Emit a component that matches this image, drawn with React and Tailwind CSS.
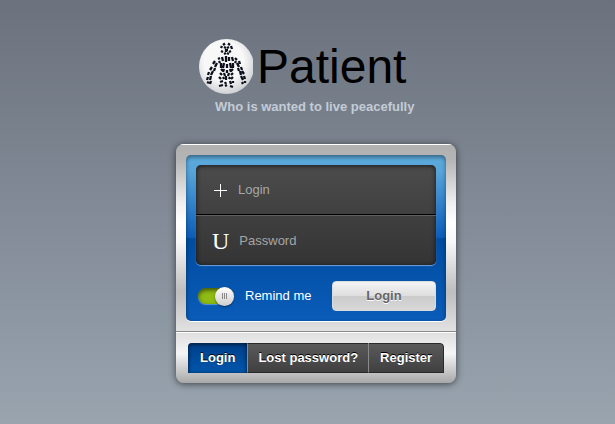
const silverTop =
  "bg-[linear-gradient(to_bottom,#b0b0b0_0%,#b4b4b4_8%,#f0f0f0_32%,#ffffff_42%,#f8f8f8_52%,#bfbfbf_78%,#bfbfbf_80%,#e2e2e2_100%)]";

const bones = [
  "M22 9l1-2M24 6l2-1.500M29 4.500l2 1.500M32 7l1 3M25 8l2 1M30 8l-2 1M22 12l2 1M32 12l-2 1M26 11h3M25 15l2-1M30 15l-2-1M27 10v3",
  "M19 20l2-1M23 18l1 4M27 17v6M30 18v4M33 18l1 4M36 19l2 2M20 22l1 2M37 22l-1 2",
  "M16 22l-2 3M18 24l-2 4M22 24v5M25 24l-1 5M28 25v4M31 24l1 5M34 24v5M38 24l2 4M40 22l1 3",
  "M13 28l-2 3M16 29l-1 3M22 30l2 2M25 30l-1 3M28 31v3M31 30l1 3M34 30l-2 2M39 29l1 3M42 28l1 3",
  "M10 33l-1 3M14 32l-2 4M21 34l2 2M25 34l1 3M30 34l-1 3M34 34l-2 2M41 32l1 4M43 32l2 3",
  "M9 38l-1 3M12 37l-1 4M20 38l2 2M24 38l1 2M27 37v4M31 38l-1 2M34 38l-2 2M42 37l2 4M45 37l1 3",
  "M8 43l2 1M12 42l-1 3M21 43l3-1M26 43l1 2M31 42l1 3M34 42v2M43 43l1 2M46 42v2",
  "M20 47l4-1M26 47l2-1M31 47l3 1",
];

function Logo() {
  return (
    <svg viewBox="0 0 54 55" className="h-[55px] w-[54px] shrink-0" aria-hidden="true">
      <defs>
        <radialGradient id="ball" cx="45%" cy="40%" r="60%">
          <stop offset="0.6" stopColor="#f8f8f8" />
          <stop offset="1" stopColor="#cfd1d4" />
        </radialGradient>
      </defs>
      <circle cx="27.5" cy="27.5" r="27.5" fill="url(#ball)" />
      <g fill="none" stroke="#0c0f1c" strokeWidth="2.3">
        {bones.map((d) => (
          <path key={d} d={d} />
        ))}
      </g>
    </svg>
  );
}

function Field({ id, label, type, children }) {
  return (
    <div className="flex h-[49px] items-center pl-4">
      <label htmlFor={id} aria-label={label} className="flex items-center text-white">
        {children}
      </label>
      <input
        id={id}
        type={type}
        placeholder={label}
        className="h-8 w-full min-w-0 bg-transparent pl-[10px] text-[13px] text-white outline-none placeholder:text-[#a6a6a6]"
      />
    </div>
  );
}

export default function App() {
  return (
    <main className="flex min-h-screen flex-col items-center bg-linear-to-b from-[#6b727e] to-[#99a4af] pt-[39px] pl-[17px] font-['Liberation_Sans',Arial,sans-serif]">
      <header className="w-[234px]">
        <h1 className="flex h-[55px] items-center gap-1 text-5xl leading-none text-black">
          <Logo />
          Patient
        </h1>
        <p className="pt-[5px] pl-4 text-[13px] leading-4 font-bold whitespace-nowrap text-[#c3ccd6]">
          Who is wanted to live peacefully
        </p>
      </header>

      <section className="mt-[29px] w-[280px] overflow-hidden rounded-lg shadow-[0_1px_7px_rgba(0,0,0,0.6)]">
        <form
          onSubmit={(e) => e.preventDefault()}
          className={`border-b border-[#8a8a8a] px-[10px] pt-[11px] pb-[10px] shadow-[inset_0_1px_0_#fff] ${silverTop}`}
        >
          <div className="rounded-[5px] bg-[linear-gradient(to_bottom,#5dabdc_0%,#57a5d9_10%,#0b5cba_50%,#004c9f_50%,#0a5cb9_100%)] p-[10px] shadow-[inset_0_2px_4px_rgba(0,0,0,0.45),0_1px_0_#fff]">
            <div className="rounded-[5px] bg-linear-to-b from-[#4c4c4c] to-[#343434] shadow-[inset_0_1px_5px_rgba(0,0,0,0.7),0_1px_1px_#6fa4dc]">
              <Field id="login" label="Login" type="text">
                <svg viewBox="0 0 16 16" className="h-4 w-4" stroke="currentColor" aria-hidden="true">
                  <path d="M8.5 2v13M2 8.5h13" />
                </svg>
              </Field>
              <div className="h-[2px] border-t border-black bg-[#606060]" />
              <Field id="password" label="Password" type="password">
                <span className="font-['Liberation_Serif',serif] text-2xl leading-none">U</span>
              </Field>
            </div>

            <div className="flex items-center justify-between pt-4">
              <label className="relative flex items-center text-[13px] text-white">
                <input
                  type="checkbox"
                  defaultChecked
                  className="peer mx-[2px] h-4 w-9 appearance-none rounded-full bg-[#555] shadow-[inset_0_2px_4px_rgba(0,0,0,0.6),0_1px_1px_#5b95d5] checked:bg-[#8fbb14]"
                />
                <span className="pointer-events-none absolute left-0 flex h-[19px] w-[19px] items-center justify-center gap-px rounded-full bg-linear-to-b from-white to-[#cfcfcf] shadow-[0_1px_2px_rgba(0,0,0,0.5)] peer-checked:left-[19px]">
                  <i className="h-[6px] w-px bg-[#888]" />
                  <i className="h-[6px] w-px bg-[#888]" />
                  <i className="h-[6px] w-px bg-[#888]" />
                </span>
                <span className="pl-[9px]">Remind me</span>
              </label>
              <button
                type="submit"
                className="h-[30px] w-[104px] rounded-[4px] border border-[#dcdcdc] bg-[linear-gradient(to_bottom,#f4f4f4_0%,#dedede_50%,#cbcbcb_50%,#d8d8d8_100%)] text-[13px] font-bold text-[#666] [text-shadow:0_1px_0_#fff]"
              >
                Login
              </button>
            </div>
          </div>
        </form>

        <div className="bg-[linear-gradient(to_bottom,#dedede_0%,#f5f5f5_42%,#a8a8a8_100%)] px-3 pt-[11px] pb-[10px] shadow-[inset_0_1px_0_#fff]">
          <nav className="flex h-[30px] w-fit overflow-hidden rounded-t-[4px] text-[13px] font-bold whitespace-nowrap text-white [text-shadow:0_-1px_0_#000]">
            <a
              href="#login"
              className="flex items-center bg-linear-to-b from-[#003f88] to-[#0056ad] px-3 shadow-[inset_0_1px_4px_rgba(0,0,0,0.7)]"
            >
              Login
            </a>
            <a
              href="#lost"
              className="flex items-center border-t border-b border-l border-y-[#2a2a2a] border-l-[#8a8a8a] bg-linear-to-b from-[#5a5a5a] to-[#404040] px-[10px]"
            >
              Lost password?
            </a>
            <a
              href="#register"
              className="flex items-center rounded-tr-[4px] border-t border-r border-b border-l border-y-[#2a2a2a] border-r-[#2a2a2a] border-l-[#8a8a8a] bg-linear-to-b from-[#5a5a5a] to-[#404040] px-[11px]"
            >
              Register
            </a>
          </nav>
        </div>
      </section>
    </main>
  );
}
